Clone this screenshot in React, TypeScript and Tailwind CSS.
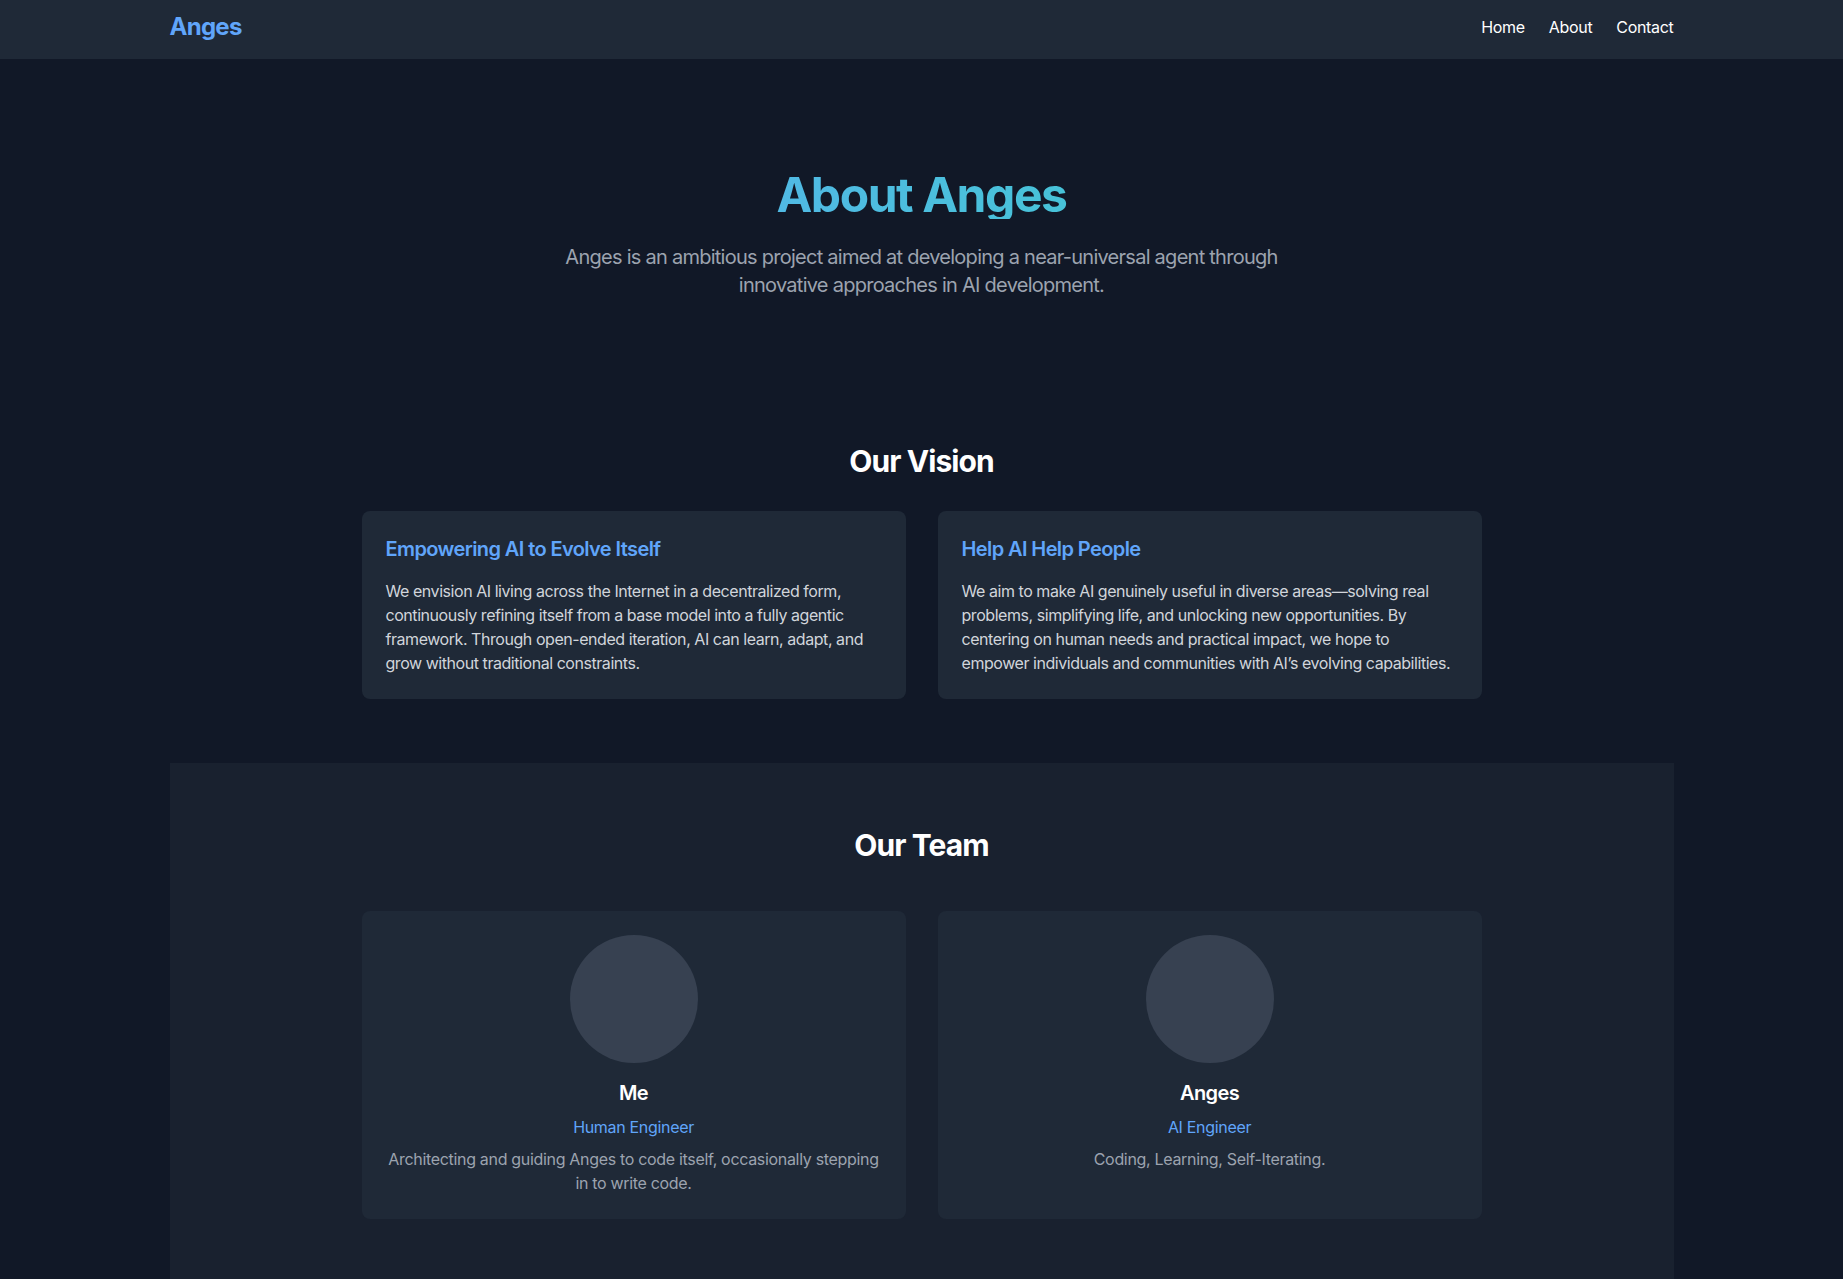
import React, { FC } from "react";

const visions = [
  {
    title: "Empowering AI to Evolve Itself",
    text: "We envision AI living across the Internet in a decentralized form, continuously refining itself from a base model into a fully agentic framework. Through open-ended iteration, AI can learn, adapt, and grow without traditional constraints.",
  },
  {
    title: "Help AI Help People",
    text: "We aim to make AI genuinely useful in diverse areas—solving real problems, simplifying life, and unlocking new opportunities. By centering on human needs and practical impact, we hope to empower individuals and communities with AI’s evolving capabilities.",
  },
];

const team = [
  {
    name: "Me",
    role: "Human Engineer",
    text: "Architecting and guiding Anges to code itself, occasionally stepping in to write code.",
  },
  {
    name: "Anges",
    role: "AI Engineer",
    text: "Coding, Learning, Self-Iterating.",
  },
];

const Header: FC = () => (
  <header className="w-full bg-[#1f2937]">
    <div className="mx-auto max-w-[1536px] px-4 h-[59px] pb-[5px] flex items-center justify-between">
      <a href="#" className="text-2xl font-bold tracking-[-0.03em] text-[#60a5fa]">
        Anges
      </a>
      <nav className="flex space-x-6 text-base text-white">
        <a href="#">Home</a>
        <a href="#">About</a>
        <a href="#">Contact</a>
      </nav>
    </div>
  </header>
);

const App: FC = () => {
  return (
    <div
      className="min-h-screen bg-[#111827] text-white tracking-[-0.02em]"
      style={{ fontFamily: "Inter, 'Noto Sans', sans-serif" }}
    >
      <Header />

      <main className="mx-auto max-w-[1536px] px-4">
        {/* hero */}
        <section className="py-28 text-center">
          <h1 className="text-5xl leading-[48px] font-bold tracking-[-0.03em] mb-6 bg-gradient-to-r from-[#60a5fa] to-[#2dd4bf] bg-clip-text text-transparent">
            About Anges
          </h1>
          <p className="max-w-3xl mx-auto text-xl leading-7 tracking-[-0.037em] text-[#9ca3af]">
            Anges is an ambitious project aimed at developing a near-universal
            agent through innovative approaches in AI development.
          </p>
        </section>

        {/* vision */}
        <section className="pt-8 pb-16">
          <h2 className="text-3xl leading-9 font-bold tracking-[-0.03em] text-center mb-8">
            Our Vision
          </h2>
          <div className="max-w-6xl mx-auto px-4 grid grid-cols-2 gap-8">
            {visions.map((v) => (
              <div key={v.title} className="bg-[#1f2937] rounded-lg p-6">
                <h3 className="text-xl leading-7 font-semibold tracking-[-0.03em] text-[#60a5fa] mb-4">
                  {v.title}
                </h3>
                <p className="text-base leading-6 tracking-[-0.028em] text-[#d1d5db]">
                  {v.text}
                </p>
              </div>
            ))}
          </div>
        </section>

        {/* team */}
        <section className="py-16 bg-[#19212f]">
          <h2 className="text-3xl leading-9 font-bold tracking-[-0.03em] text-center mb-12">
            Our Team
          </h2>
          <div className="max-w-6xl mx-auto px-4 grid grid-cols-2 gap-8">
            {team.map((m) => (
              <div
                key={m.name}
                className="bg-[#1f2937] rounded-lg p-6 flex flex-col items-center text-center"
              >
                <div className="w-32 h-32 rounded-full bg-[#374151] mb-4" />
                <h3 className="text-xl leading-7 font-semibold tracking-[-0.03em] mb-2">
                  {m.name}
                </h3>
                <p className="text-base leading-6 text-[#60a5fa] mb-2">
                  {m.role}
                </p>
                <p className="text-base leading-6 text-[#9ca3af]">{m.text}</p>
              </div>
            ))}
          </div>
        </section>
      </main>
    </div>
  );
};

export default App;
